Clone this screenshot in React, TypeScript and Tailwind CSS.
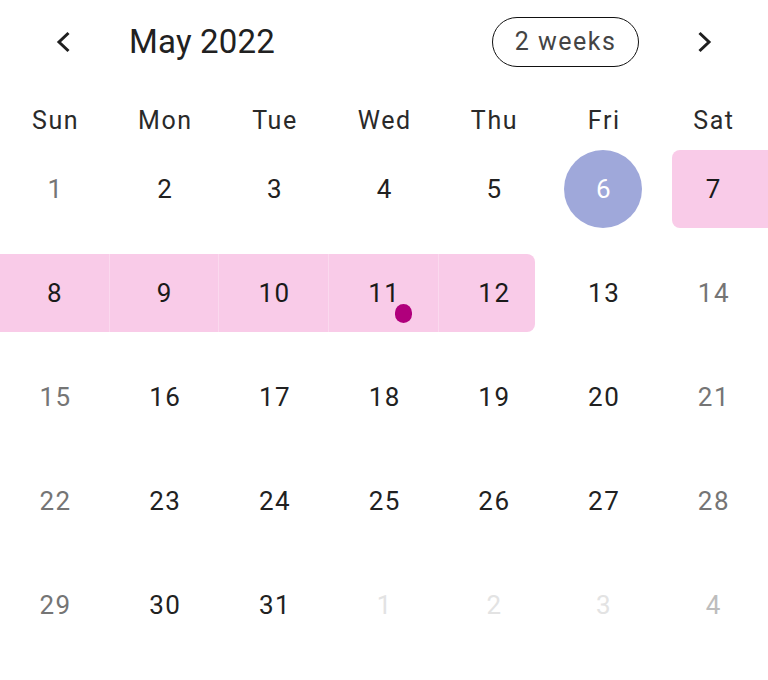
import React from 'react';

type Day = {
  n: number;
  muted?: boolean; // weekend
  next?: boolean; // next month
  range?: 'start' | 'mid' | 'end';
  today?: boolean;
  dot?: boolean;
};

const WEEKDAYS = ['Sun', 'Mon', 'Tue', 'Wed', 'Thu', 'Fri', 'Sat'];

function buildWeeks(): Day[][] {
  const weeks: Day[][] = [];
  let n = 1;
  for (let w = 0; w < 5; w++) {
    const row: Day[] = [];
    for (let d = 0; d < 7; d++) {
      const next = n > 31;
      const day: Day = { n: next ? n - 31 : n, muted: d === 0 || d === 6, next };
      if (n === 6) day.today = true;
      if (n === 7) day.range = 'start';
      if (n >= 8 && n <= 11) day.range = 'mid';
      if (n === 12) day.range = 'end';
      if (n === 11) day.dot = true;
      row.push(day);
      n++;
    }
    weeks.push(row);
  }
  return weeks;
}

function Chevron({ dir }: { dir: 'left' | 'right' }) {
  return (
    <svg width="24" height="24" viewBox="0 0 24 24" className="text-[#1f1f1f]">
      <path
        d={dir === 'left' ? 'M16.5 3 L7 12 L16.5 21' : 'M7.5 3 L17 12 L7.5 21'}
        fill="none"
        stroke="currentColor"
        strokeWidth="3"
      />
    </svg>
  );
}

function DayCell({ day }: { day: Day }) {
  let color = 'text-[#212121]';
  if (day.muted) color = 'text-[#757575]';
  if (day.next) color = day.muted ? 'text-[#bdbdbd]' : 'text-[#e3e3e3]';

  let band = '';
  if (day.range === 'start') band = 'ml-[14px] pr-[14px] rounded-l-lg bg-[#f9cbe8]';
  if (day.range === 'mid') band = 'bg-[#f9cbe8] border-r border-[#fbd9ee]';
  if (day.range === 'end') band = 'mr-[14px] pl-[14px] rounded-r-lg bg-[#f9cbe8]';

  return (
    <div className={`relative h-[78px] flex items-center justify-center ${band}`}>
      {day.today ? (
        <div className="w-[78px] h-[78px] rounded-full bg-[#9fa8da] flex items-center justify-center text-white pl-[1.5px]">
          {day.n}
        </div>
      ) : (
        <span className={`pl-[1.5px] ${day.range ? 'text-[#1a1a1a]' : color}`}>{day.n}</span>
      )}
      {day.dot && (
        <span className="absolute left-1/2 top-1/2 ml-[12px] mt-[11px] w-[17px] h-[19px] rounded-full bg-[#b0007c]" />
      )}
    </div>
  );
}

export default function App() {
  const weeks = buildWeeks();
  return (
    <div
      className="w-[768px] h-[680px] bg-white overflow-hidden"
      style={{ fontFamily: 'Roboto, "Noto Sans", sans-serif' }}
    >
      {/* Header */}
      <div className="h-[83px] flex items-center pl-[52px] pr-[52px]">
        <button className="w-[24px] h-[24px] flex items-center justify-center">
          <Chevron dir="left" />
        </button>
        <div className="ml-[53px] text-[33px] text-[#212121] tracking-[0.2px]">May 2022</div>
        <div className="flex-1" />
        <div className="h-[50px] w-[147px] rounded-full border-[1.5px] border-[#111] flex items-center justify-center text-[25px] text-[#444] tracking-[1.5px]">
          2 weeks
        </div>
        <button className="ml-[53px] w-[24px] h-[24px] flex items-center justify-center">
          <Chevron dir="right" />
        </button>
      </div>

      {/* Weekday labels */}
      <div className="grid grid-cols-7 h-[67px] pt-[9px] items-center text-[25px] text-[#2a2a2a] tracking-[1.6px]">
        {WEEKDAYS.map((w) => (
          <div key={w} className="text-center pl-[1.6px]">
            {w}
          </div>
        ))}
      </div>

      {/* Days */}
      <div className="flex flex-col gap-y-[26px] text-[26px] tracking-[1.5px]">
        {weeks.map((row, i) => (
          <div key={i} className="grid grid-cols-7">
            {row.map((d, j) => (
              <DayCell key={j} day={d} />
            ))}
          </div>
        ))}
      </div>
    </div>
  );
}
